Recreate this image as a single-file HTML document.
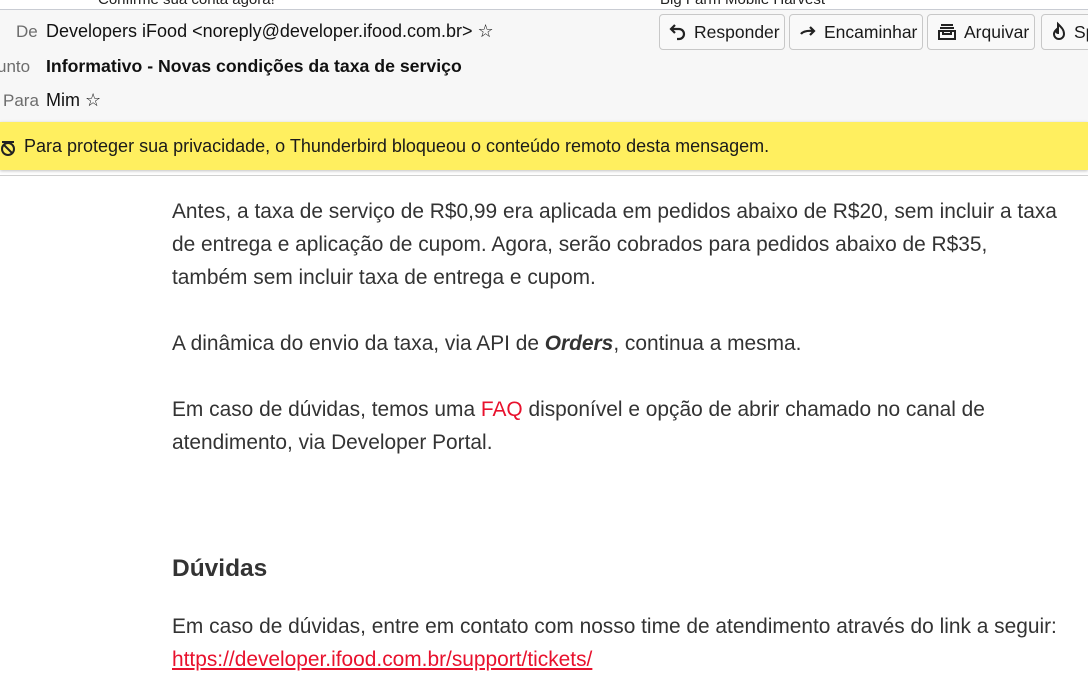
<!DOCTYPE html>
<html><head><meta charset="utf-8"><style>
*{margin:0;padding:0;box-sizing:border-box}
body{width:1088px;height:690px;overflow:hidden;background:#fff;font-family:"Liberation Sans","DejaVu Sans",sans-serif;position:relative}
.top{position:absolute;left:0;top:0;width:1088px;height:10px;background:#fff;border-bottom:1px solid #c9ccd3;overflow:hidden}
.top span{position:absolute;top:-9px;font-size:15px;color:#222}
.hdr{position:absolute;left:0;top:10px;width:1088px;height:112px;background:#f7f7f7}
.lbl{position:absolute;font-size:17px;color:#6d6d6d}
.val{position:absolute;font-size:18px;color:#111}
.btn{position:absolute;top:14px;height:36px;border:1px solid #c8c8c8;border-radius:4px;background:#f9f9f9;font-size:17.5px;color:#1a1a1a;display:flex;align-items:center;padding-left:8px;gap:6px;white-space:nowrap;overflow:hidden}
.yel{position:absolute;left:0;top:122px;width:1088px;height:48px;background:#ffef5f;box-shadow:0 1px 3px rgba(0,0,0,.25);font-size:18px;color:#1a1a1a}
.sep{position:absolute;left:0;top:175px;width:1088px;height:1px;background:#d0d0d0}
.p{position:absolute;left:172px;font-size:20.9px;line-height:33px;color:#333;width:894px}
a{color:#e8112d}
</style></head><body>
<div class="top"><span style="left:98px">Confirme sua conta agora!</span><span style="left:660px">Big Farm Mobile Harvest</span></div>
<div class="hdr">
<div class="lbl" style="left:16px;top:12px">De</div>
<div class="val" style="left:46px;top:11px">Developers iFood &lt;noreply@developer.ifood.com.br&gt; ☆</div>
<div class="lbl" style="left:-3px;top:47px">unto</div>
<div class="val" style="left:46px;top:46px;font-weight:bold;font-size:17.7px">Informativo - Novas condições da taxa de serviço</div>
<div class="lbl" style="left:3px;top:81px">Para</div>
<div class="val" style="left:46px;top:80px">Mim ☆</div>
</div>
<div class="btn" style="left:659px;width:126px;top:14px"><svg width="20" height="20" viewBox="0 0 20 20"><path d="M7 3 3 7l4 4M3 7h8a5 5 0 0 1 0 10h-2" fill="none" stroke="#222" stroke-width="2.2"/></svg>Responder</div>
<div class="btn" style="left:789px;width:134px;top:14px"><svg width="20" height="20" viewBox="0 0 20 20"><path d="M3 12 Q6 8 16 9M12 5l4 4-4 4" fill="none" stroke="#222" stroke-width="2.2"/></svg>Encaminhar</div>
<div class="btn" style="left:927px;width:108px;top:14px"><svg width="22" height="20" viewBox="0 0 22 20"><path d="M5 3h12M4 6h14M3 9h16v8H3zM7 9v3h8V9" fill="none" stroke="#222" stroke-width="2"/></svg>Arquivar</div>
<div class="btn" style="left:1041px;width:60px;top:14px"><svg width="18" height="22" viewBox="0 0 18 22"><path d="M8 3c4 4 6 6 6 10a5 5 0 0 1-10 0c0-2 1-3 2-4 0 2 1 3 2 3 0-3 0-6 0-9z" fill="none" stroke="#222" stroke-width="2"/></svg>Sp</div>
<div class="yel"><svg style="position:absolute;left:-2px;top:15px" width="20" height="20" viewBox="0 0 20 20"><circle cx="10" cy="12" r="6" fill="none" stroke="#222" stroke-width="2"/><path d="M6 8l8 8M4 5h12" stroke="#222" stroke-width="2"/></svg><span style="position:absolute;left:24px;top:14px">Para proteger sua privacidade, o Thunderbird bloqueou o conteúdo remoto desta mensagem.</span></div>
<div class="sep"></div>
<div class="p" style="top:195px">Antes, a taxa de serviço de R$0,99 era aplicada em pedidos abaixo de R$20, sem incluir a taxa de entrega e aplicação de cupom. Agora, serão cobrados para pedidos abaixo de R$35,<br>também sem incluir taxa de entrega e cupom.</div>
<div class="p" style="top:327px">A dinâmica do envio da taxa, via API de <b><i>Orders</i></b>, continua a mesma.</div>
<div class="p" style="top:393px">Em caso de dúvidas, temos uma <a style="text-decoration:none">FAQ</a> disponível e opção de abrir chamado no canal de atendimento, via Developer Portal.</div>
<div class="p" style="top:552px;font-size:24.5px;font-weight:bold;line-height:33px">Dúvidas</div>
<div class="p" style="top:610px">Em caso de dúvidas, entre em contato com nosso time de atendimento através do link a seguir:<br><a href="#">https://developer.ifood.com.br/support/tickets/</a></div>
</body></html>
